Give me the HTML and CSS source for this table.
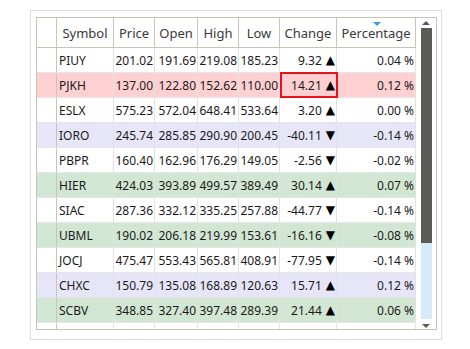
FILE: index.html
```html
<!DOCTYPE html>
<html>
<head>
<meta charset="utf-8">
<link rel="stylesheet" href="styles.css">
</head>
<body>
<div class="frame">
  <div class="grid">
    <div class="table">
      <div class="hrow">
        <div class="c rh"></div>
        <div class="c w-sym">Symbol</div>
        <div class="c w-p">Price</div>
        <div class="c w-o">Open</div>
        <div class="c w-h">High</div>
        <div class="c w-l">Low</div>
        <div class="c w-c">Change</div>
        <div class="c w-pc sorted">Percentage</div>
      </div>
      <div class="row">
        <div class="c rh"></div><div class="c w-sym sym">PIUY</div><div class="c w-p num">201.02</div><div class="c w-o num">191.69</div><div class="c w-h num">219.08</div><div class="c w-l num">185.23</div><div class="c w-c num"><span>9.32</span><span class="tri">▲</span></div><div class="c w-pc num">0.04 %</div>
      </div>
      <div class="row pink">
        <div class="c rh"></div><div class="c w-sym sym">PJKH</div><div class="c w-p num">137.00</div><div class="c w-o num">122.80</div><div class="c w-h num">152.62</div><div class="c w-l num">110.00</div><div class="c w-c num current"><span>14.21</span><span class="tri">▲</span></div><div class="c w-pc num">0.12 %</div>
      </div>
      <div class="row">
        <div class="c rh"></div><div class="c w-sym sym">ESLX</div><div class="c w-p num">575.23</div><div class="c w-o num">572.04</div><div class="c w-h num">648.41</div><div class="c w-l num">533.64</div><div class="c w-c num"><span>3.20</span><span class="tri">▲</span></div><div class="c w-pc num">0.00 %</div>
      </div>
      <div class="row lav">
        <div class="c rh"></div><div class="c w-sym sym">IORO</div><div class="c w-p num">245.74</div><div class="c w-o num">285.85</div><div class="c w-h num">290.90</div><div class="c w-l num">200.45</div><div class="c w-c num"><span>-40.11</span><span class="tri">▼</span></div><div class="c w-pc num">-0.14 %</div>
      </div>
      <div class="row">
        <div class="c rh"></div><div class="c w-sym sym">PBPR</div><div class="c w-p num">160.40</div><div class="c w-o num">162.96</div><div class="c w-h num">176.29</div><div class="c w-l num">149.05</div><div class="c w-c num"><span>-2.56</span><span class="tri">▼</span></div><div class="c w-pc num">-0.02 %</div>
      </div>
      <div class="row green">
        <div class="c rh"></div><div class="c w-sym sym">HIER</div><div class="c w-p num">424.03</div><div class="c w-o num">393.89</div><div class="c w-h num">499.57</div><div class="c w-l num">389.49</div><div class="c w-c num"><span>30.14</span><span class="tri">▲</span></div><div class="c w-pc num">0.07 %</div>
      </div>
      <div class="row">
        <div class="c rh"></div><div class="c w-sym sym">SIAC</div><div class="c w-p num">287.36</div><div class="c w-o num">332.12</div><div class="c w-h num">335.25</div><div class="c w-l num">257.88</div><div class="c w-c num"><span>-44.77</span><span class="tri">▼</span></div><div class="c w-pc num">-0.14 %</div>
      </div>
      <div class="row green">
        <div class="c rh"></div><div class="c w-sym sym">UBML</div><div class="c w-p num">190.02</div><div class="c w-o num">206.18</div><div class="c w-h num">219.99</div><div class="c w-l num">153.61</div><div class="c w-c num"><span>-16.16</span><span class="tri">▼</span></div><div class="c w-pc num">-0.08 %</div>
      </div>
      <div class="row">
        <div class="c rh"></div><div class="c w-sym sym">JOCJ</div><div class="c w-p num">475.47</div><div class="c w-o num">553.43</div><div class="c w-h num">565.81</div><div class="c w-l num">408.91</div><div class="c w-c num"><span>-77.95</span><span class="tri">▼</span></div><div class="c w-pc num">-0.14 %</div>
      </div>
      <div class="row lav">
        <div class="c rh"></div><div class="c w-sym sym">CHXC</div><div class="c w-p num">150.79</div><div class="c w-o num">135.08</div><div class="c w-h num">168.89</div><div class="c w-l num">120.63</div><div class="c w-c num"><span>15.71</span><span class="tri">▲</span></div><div class="c w-pc num">0.12 %</div>
      </div>
      <div class="row green">
        <div class="c rh"></div><div class="c w-sym sym">SCBV</div><div class="c w-p num">348.85</div><div class="c w-o num">327.40</div><div class="c w-h num">397.48</div><div class="c w-l num">289.39</div><div class="c w-c num"><span>21.44</span><span class="tri">▲</span></div><div class="c w-pc num">0.06 %</div>
      </div>
      <div class="row filler">
        <div class="c rh"></div><div class="c w-sym"></div><div class="c w-p"></div><div class="c w-o"></div><div class="c w-h"></div><div class="c w-l"></div><div class="c w-c"></div><div class="c w-pc"></div>
      </div>
    </div>
    <div class="scroll">
      <div class="arrow"><span class="up"></span></div>
      <div class="thumb"></div>
      <div class="track"></div>
      <div class="arrow bottom"><span class="down"></span></div>
    </div>
  </div>
</div>
</body>
</html>
```
FILE: styles.css
```css
html, body {
  margin: 0;
  padding: 0;
  background: #ffffff;
}
body {
  font-family: "Noto Sans", "Open Sans", sans-serif;
  color: #1a1a1a;
}
.frame {
  margin: 10px 0 0 30px;
  width: 401px;
  height: 313px;
  padding: 6px 4px 9px 5px;
  border: 1px solid #dcdcdc;
}
.grid {
  width: 401px;
  height: 313px;
  box-sizing: border-box;
  border: 1px solid #c6c6b6;
  display: flex;
  overflow: hidden;
}
.table {
  width: 379px;
  display: flex;
  flex-direction: column;
}
.hrow, .row {
  display: flex;
  box-sizing: border-box;
}
.hrow {
  height: 30px;
  border-bottom: 1px solid #c6c6b6;
  font-size: 13px;
  color: #3a3a3a;
}
.row {
  height: 25px;
  border-bottom: 1px solid #e6e6e6;
  font-size: 12px;
}
.row.filler {
  flex: 1;
  border-bottom: none;
}
.c {
  box-sizing: border-box;
  height: 100%;
  display: flex;
  align-items: center;
  border-right: 1px solid #e2e2e2;
  white-space: nowrap;
  position: relative;
}
.hrow .c {
  justify-content: center;
  border-right-color: #c6c6b6;
}
.c.rh {
  width: 20px;
  border-right-color: #c6c6b6;
}
.w-sym { width: 57px; }
.w-p { width: 41px; }
.w-o { width: 43px; }
.w-h { width: 41px; }
.w-l { width: 41px; }
.w-c { width: 57px; }
.w-pc { width: 79px; }
.sym {
  padding-left: 2px;
}
.num {
  justify-content: flex-end;
  padding-right: 1px;
}
.tri {
  font-family: "DejaVu Sans", sans-serif;
  font-size: 12px;
  color: #000;
  margin-left: 4px;
}
.pink { background: #ffd0d2; }
.lav { background: #e6e6f8; }
.green { background: #d2e7d3; }
.current::after {
  content: "";
  position: absolute;
  left: 0;
  right: -2px;
  top: -1px;
  bottom: -1px;
  border: 2px solid #e8141a;
}
.sorted::before {
  content: "";
  position: absolute;
  top: 4px;
  left: 36px;
  border-left: 4px solid transparent;
  border-right: 4px solid transparent;
  border-top: 4px solid #3d9be0;
}
.scroll {
  width: 20px;
  display: flex;
  flex-direction: column;
  align-items: center;
}
.arrow {
  height: 10px;
  width: 11px;
  display: flex;
  justify-content: center;
  align-items: center;
}
.arrow.bottom {
  align-items: flex-end;
  padding-bottom: 1px;
  box-sizing: border-box;
}
.up {
  border-left: 4px solid transparent;
  border-right: 4px solid transparent;
  border-bottom: 4px solid #5a5a5a;
}
.down {
  border-left: 4px solid transparent;
  border-right: 4px solid transparent;
  border-top: 4px solid #5a5a5a;
}
.thumb {
  width: 11px;
  height: 215px;
  background: #5b5b55;
}
.track {
  width: 11px;
  flex: 1;
  background: #d5eaf8;
}
```
